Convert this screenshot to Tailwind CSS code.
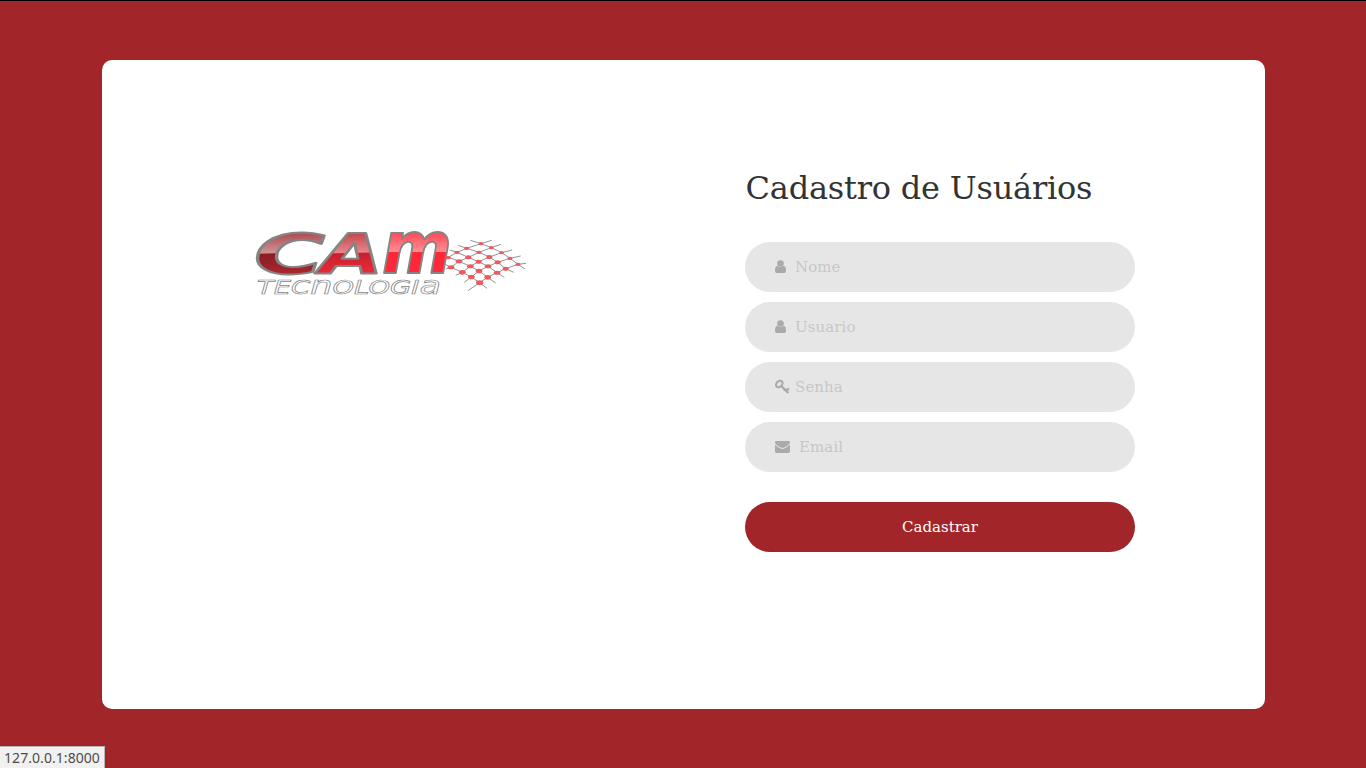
<!DOCTYPE html>
<html lang="pt-BR">
<head>
<meta charset="utf-8">
<title>Cadastro de Usuários</title>
<script src="https://cdn.jsdelivr.net/npm/@tailwindcss/browser@4"></script>
</head>
<body class="relative flex h-screen w-screen justify-center overflow-hidden border-t border-black bg-[#a22529] pt-[59px] font-['DejaVu_Serif',serif]">
<main class="flex h-[649px] w-[1163px] rounded-[10px] bg-white">
  <div class="w-[643px] pt-[165px] pl-[148px]">
    <svg class="block overflow-visible" width="285" height="76" viewBox="250 225 285 76" role="img" aria-label="CAM Tecnologia">
      <defs>
        <linearGradient id="c" gradientUnits="userSpaceOnUse" x1="290" y1="231" x2="291" y2="274">
          <stop offset="0" stop-color="#a84449"/><stop offset=".5" stop-color="#cf9496"/><stop offset=".52" stop-color="#8b1d23"/><stop offset="1" stop-color="#a8272d"/>
        </linearGradient>
        <linearGradient id="a" gradientUnits="userSpaceOnUse" x1="350" y1="231" x2="351" y2="274">
          <stop offset="0" stop-color="#bd4147"/><stop offset=".5" stop-color="#e8868b"/><stop offset=".52" stop-color="#c9202c"/><stop offset="1" stop-color="#ec2a38"/>
        </linearGradient>
        <linearGradient id="m" gradientUnits="userSpaceOnUse" x1="0" y1="-43" x2="0" y2="0">
          <stop offset="0" stop-color="#ff3f4c"/><stop offset=".5" stop-color="#ff8d94"/><stop offset=".52" stop-color="#ff2636"/><stop offset="1" stop-color="#ff2a3a"/>
        </linearGradient>
      </defs>
      <g font-family="DejaVu Sans" font-weight="700" font-style="italic" font-size="56" stroke="#858585" stroke-width="2" stroke-linejoin="round">
        <text x="254" y="273" textLength="71" lengthAdjust="spacingAndGlyphs" fill="url(#c)">C</text>
        <text x="320" y="273" textLength="63" lengthAdjust="spacingAndGlyphs" fill="url(#a)">A</text>
        <text transform="translate(382 273)" font-size="73" textLength="70" lengthAdjust="spacingAndGlyphs" fill="url(#m)">m</text>
      </g>
      <text x="257" y="293.500" textLength="184" font-family="DejaVu Sans" font-style="italic" font-size="19.500" fill="#fff" stroke="#858585" stroke-width=".65" lengthAdjust="spacingAndGlyphs">TEC<tspan font-size="25">n</tspan>OLOGI<tspan font-size="25">a</tspan></text>
      <g transform="translate(435 225) scale(.33333)">
        <g fill="none" stroke="#777" stroke-width="2.4">
          <path d="M106 46L138 56L169 68L200 83L225 100L249 118L270 132"/>
          <path d="M70 61L95 70L132 82L163 96L188 112L212 131L236 142"/>
          <path d="M44 75L66 82L100 97L131 110L159 124L186 143L208 157"/>
          <path d="M34 94L72 109L106 124L132 138L158 157L182 174"/>
          <path d="M31 118L48 127L82 142L109 156L134 173L156 190"/>
          <path d="M170 46L138 56L95 70L66 82L38 98L30 104"/>
          <path d="M198 58L169 68L132 82L100 97L72 109L48 127L32 132"/>
          <path d="M231 75L200 83L163 96L131 110L106 124L82 142L62 151"/>
          <path d="M257 93L225 100L188 112L159 124L132 138L109 156L88 172"/>
          <path d="M273 115L249 118L212 131L186 143L158 157L134 173L99 197"/>
        </g>
        <g fill="#ef5860">
          <ellipse cx="138" cy="56" rx="7" ry="5"/><ellipse cx="169" cy="68" rx="7" ry="5"/><ellipse cx="200" cy="83" rx="7" ry="5"/><ellipse cx="225" cy="100" rx="8" ry="5"/><ellipse cx="249" cy="118" rx="8" ry="5"/>
          <ellipse cx="95" cy="70" rx="8" ry="5"/><ellipse cx="132" cy="82" rx="8" ry="5"/><ellipse cx="163" cy="96" rx="9" ry="6"/><ellipse cx="188" cy="112" rx="9" ry="6"/><ellipse cx="212" cy="131" rx="9" ry="6"/>
          <ellipse cx="66" cy="82" rx="8" ry="5"/><ellipse cx="100" cy="97" rx="9" ry="6"/><ellipse cx="131" cy="110" rx="9" ry="6"/><ellipse cx="159" cy="124" rx="10" ry="6"/><ellipse cx="186" cy="143" rx="10" ry="6"/>
          <ellipse cx="38" cy="98" rx="9" ry="5"/><ellipse cx="72" cy="109" rx="10" ry="6"/><ellipse cx="106" cy="124" rx="10" ry="6"/><ellipse cx="132" cy="138" rx="10" ry="7"/><ellipse cx="158" cy="157" rx="10" ry="7"/>
          <ellipse cx="48" cy="127" rx="10" ry="6"/><ellipse cx="82" cy="142" rx="10" ry="7"/><ellipse cx="109" cy="156" rx="10" ry="7"/><ellipse cx="134" cy="173" rx="11" ry="7"/>
        </g>
      </g>
    </svg>
  </div>
  <form class="w-[390px] pt-[109px]">
    <h1 class="mb-[34px] h-[39px] pl-px text-[32px] leading-[39px] tracking-[-0.21px] whitespace-nowrap text-[#333]">Cadastro de Usuários</h1>
    <label class="mb-2.5 flex h-[50px] items-center rounded-full bg-[#e6e6e6] pl-[30px]">
      <svg class="w-5 shrink-0" height="16" viewBox="0 0 20 16" fill="#aaa"><path d="M0 11.200C0 8.700.8 7 2.500 6.800Q5.500 9.300 8.500 6.800C10.200 7 11 8.700 11 11.200C11 13.300 10.200 14 9 14H2C.8 14 0 13.300 0 11.200Z"/><circle cx="5.500" cy="4.500" r="3.300"/></svg>
      <input type="text" placeholder="Nome" class="ml-[0.5px] h-full w-[300px] bg-transparent text-[15px] outline-none placeholder:text-[#c6c6c6]">
    </label>
    <label class="mb-2.5 flex h-[50px] items-center rounded-full bg-[#e6e6e6] pl-[30px]">
      <svg class="w-5 shrink-0" height="16" viewBox="0 0 20 16" fill="#aaa"><path d="M0 11.200C0 8.700.8 7 2.500 6.800Q5.500 9.300 8.500 6.800C10.200 7 11 8.700 11 11.200C11 13.300 10.200 14 9 14H2C.8 14 0 13.300 0 11.200Z"/><circle cx="5.500" cy="4.500" r="3.300"/></svg>
      <input type="text" placeholder="Usuario" class="ml-[0.5px] h-full w-[300px] bg-transparent text-[15px] tracking-[0.1px] outline-none placeholder:text-[#c6c6c6]">
    </label>
    <label class="mb-2.5 flex h-[50px] items-center rounded-full bg-[#e6e6e6] pl-[30px]">
      <svg class="w-5 shrink-0" height="16" viewBox="0 0 20 16" fill="none" stroke="#aaa" stroke-width="2.100"><ellipse cx="4.300" cy="5" rx="3.700" ry="2.700" transform="rotate(-45 4.300 5)"/><path d="M6 6.800L13.300 14M8.700 11.500L10.700 9.500M11 12.200L13.900 9.300"/></svg>
      <input type="password" placeholder="Senha" class="ml-[0.5px] h-full w-[300px] bg-transparent text-[15px] tracking-[0.1px] outline-none placeholder:text-[#c6c6c6]">
    </label>
    <label class="flex h-[50px] items-center rounded-full bg-[#e6e6e6] pl-[30px]">
      <svg class="w-6 shrink-0" height="16" viewBox="0 0 24 16" fill="#aaa"><path d="M0 3.400Q0 2 1.400 2H13.600Q15 2 15 3.400C15 5 10 8.700 7.500 8.700S0 5 0 3.400Z"/><path d="M0 5.700C2 7.400 5.500 9.900 7.500 9.900S13 7.400 15 5.700V12.600Q15 14 13.600 14H1.400Q0 14 0 12.600Z"/></svg>
      <input type="text" placeholder="Email" class="ml-[0.5px] h-full w-[300px] bg-transparent text-[15px] tracking-[0.1px] outline-none placeholder:text-[#c6c6c6]">
    </label>
    <button type="button" class="mt-[30px] h-[50px] w-full rounded-full bg-[#a22529] pl-px text-[15px] text-white">Cadastrar</button>
  </form>
</main>
<div class="absolute bottom-0 left-0 flex h-[22px] w-[105px] items-center border-t border-r border-[#b9b5b1] bg-[#f2f1f0] pl-1 font-['Noto_Sans',sans-serif] text-sm whitespace-nowrap text-[#4c4c4c]"><span class="tracking-[0.06px]">127.0.0.1:8000</span></div>
</body>
</html>
